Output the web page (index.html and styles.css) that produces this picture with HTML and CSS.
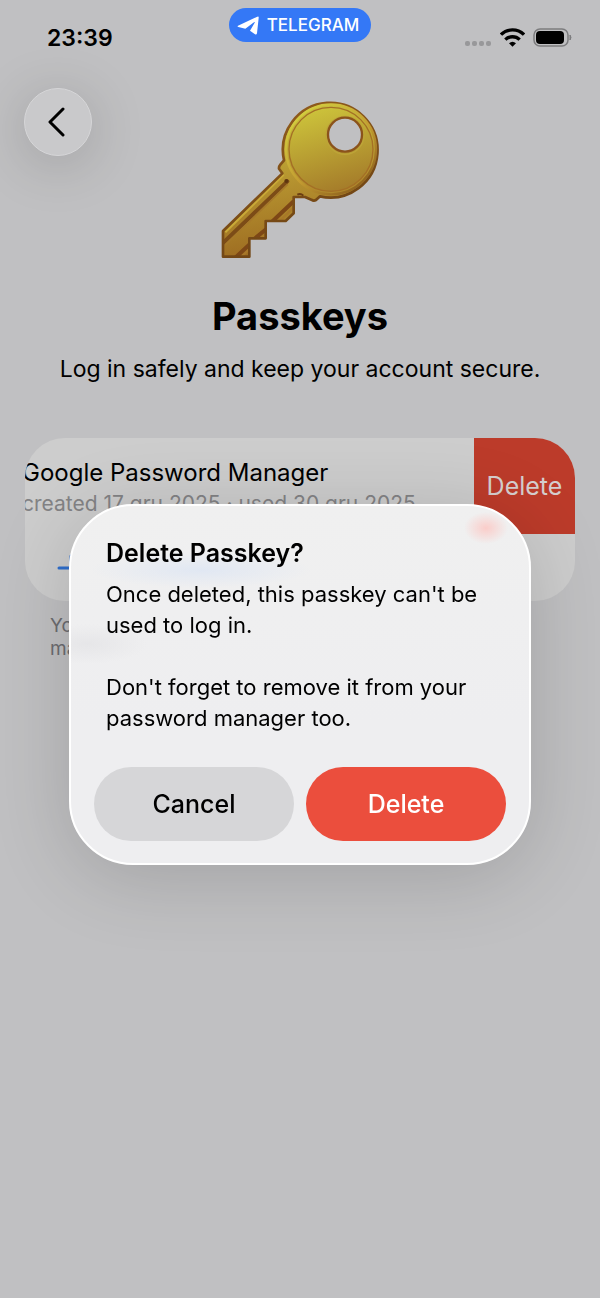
FILE: index.html
```html
<!DOCTYPE html>
<html lang="en">
<head>
	<meta charset="UTF-8">
	<meta name="viewport" content="width=device-width, initial-scale=1">
	<title>Passkeys</title>
	<link rel="stylesheet" href="styles.css">
</head>
<body>
<div class="status">
	<span class="time">23:39</span>
	<div class="app_pill">
		<svg width="22" height="19" viewBox="0 0 66 57"><path d="M3 29 61 2q5-2 4 4l-5 46q-1 5-6 3L39 44l14-24q2-4-2-1L25 38 4 33q-4-2-1-4Z" fill="#fff"/></svg>
		<span>TELEGRAM</span>
	</div>
	<div class="status_icons">
		<svg width="27" height="19" viewBox="0 0 27 19" fill="#98989a"><rect y="13" width="5" height="5" rx="2"/><rect x="7" y="13" width="5" height="5" rx="2"/><rect x="14" y="13" width="5" height="5" rx="2"/><rect x="21" y="13" width="5" height="5" rx="2"/></svg>
		<svg width="25" height="19" viewBox="0 0 75 57" fill="none" stroke="#000" stroke-width="10"><path d="M3 20a49 49 0 0 1 69 0M16 35a31 31 0 0 1 43 0"/><path d="M27 46q10.500-10 21 0L37.500 56Z" fill="#000" stroke="none"/></svg>
		<svg width="39" height="19" viewBox="0 0 39 19"><rect x="1" y="1" width="34" height="17" rx="6" fill="none" stroke="#7c7c7e" stroke-width="1.500"/><rect x="3" y="3" width="28" height="13" rx="4"/><path d="M37 7q2 2.500 0 5Z" fill="#7c7c7e" stroke="#7c7c7e"/></svg>
	</div>
</div>

<div class="header">
	<button class="back" type="button" aria-label="Back">
		<svg width="17" height="30" viewBox="0 0 17 30" fill="none" stroke="#000" stroke-width="3" stroke-linecap="round" stroke-linejoin="round"><path d="M15 2 2 15l13 13"/></svg>
	</button>
	<svg class="key" width="200" height="180" viewBox="0 -6 600 540">
		<defs>
			<linearGradient id="gold" x1="0.400" y1="0" x2="0.600" y2="1">
				<stop offset="0" stop-color="#cbc43c"/>
				<stop offset="0.500" stop-color="#b5922f"/>
				<stop offset="1" stop-color="#99651f"/>
			</linearGradient>
			<linearGradient id="face" x1="0.300" y1="0" x2="0.600" y2="1">
				<stop offset="0" stop-color="#cdc43b"/>
				<stop offset="1" stop-color="#a57c2a"/>
			</linearGradient>
			<linearGradient id="edge" x1="0" y1="0" x2="0.500" y2="1">
				<stop offset="0" stop-color="#99611f"/>
				<stop offset="1" stop-color="#6b4213"/>
			</linearGradient>
			<linearGradient id="shine" x1="0" y1="0" x2="0.800" y2="1">
				<stop offset="0" stop-color="#d8dc43"/>
				<stop offset="0.600" stop-color="#c39b31"/>
				<stop offset="1" stop-color="#8a5c1c"/>
			</linearGradient>
			<clipPath id="blade"><path d="M69 423 247 247 236 232 252 211A142 142 0 1 1 360 319L341 331 315 320H281V368L257 393H197V444H148V500H69Z"/></clipPath>
		</defs>
		<path d="M69 423 247 250 237 236Q236 230 241 224L252 211A142 142 0 1 1 360 319L348 330Q341 334 334 329L315 321H281V370L257 393H197V445H148V500H69Z" fill="url(#gold)"/>
		<g clip-path="url(#blade)">
			<path d="M76 427 251 254" stroke="#c9aa38" stroke-width="6"/>
			<path d="M70 458 262 274" stroke="#7c4c17" stroke-width="12" stroke-linecap="round"/>
			<path d="M77 464 263 283" stroke="#a6792a" stroke-width="5"/>
			<path d="M106 503 150 462M159 450 200 416M216 395 281 334" stroke="#7d4716" stroke-width="12"/>
			<path d="M118 506 152 474M174 454 202 430M231 401 281 352" stroke="#a87729" stroke-width="6"/>
		</g>
		<path d="M69 423 247 250 237 236Q236 230 241 224L252 211A142 142 0 1 1 360 319L348 330Q341 334 334 329L315 321H281V370L257 393H197V445H148V500H69Z" fill="none" stroke="url(#edge)" stroke-width="8" stroke-linejoin="round"/>
		<circle cx="393" cy="178" r="135" fill="none" stroke="url(#shine)" stroke-width="7"/>
		<circle cx="393" cy="178" r="126" fill="url(#face)" stroke="#a46f25" stroke-width="4"/>
		<circle cx="435" cy="136" r="57" fill="none" stroke="#bda438" stroke-width="4"/>
		<circle cx="435" cy="134" r="51" fill="#c0c0c2" stroke="#8b531b" stroke-width="7"/>
		<path d="M292 314q10-5 18 3" fill="none" stroke="#6b3d12" stroke-width="6"/>
		<circle cx="259" cy="273" r="6" fill="#5d350f"/>
	</svg>
</div>

<h1>Passkeys</h1>
<p class="intro">Log in safely and keep your account secure.</p>

<div class="list">
	<div class="row">
		<div class="row_text">
			<div class="row_name">Google Password Manager</div>
			<div class="row_date">created 17 gru 2025 · used 30 gru 2025</div>
		</div>
		<button class="swipe_delete" type="button">Delete</button>
	</div>
	<div class="row_add">
		<svg width="28" height="28" viewBox="0 0 28 28" stroke="#2f6fcd" stroke-width="3" stroke-linecap="round"><path d="M2 14h24M14 2v24"/></svg>
	</div>
</div>
<p class="note">Yo<br>ma</p>

<div class="overlay">
	<div class="dialog" role="alertdialog" aria-labelledby="dialogTitle" aria-describedby="dialogText">
		<h2 id="dialogTitle">Delete Passkey?</h2>
		<div class="dialog_text" id="dialogText">
			<p>Once deleted, this passkey can't be used to log in.</p>
			<p>Don't forget to remove it from your password manager too.</p>
		</div>
		<div class="dialog_btns">
			<button class="btn" type="button">Cancel</button>
			<button class="btn btn_red" type="button">Delete</button>
		</div>
	</div>
</div>
</body>
</html>
```

FILE: styles.css
```css
*{margin:0;padding:0;box-sizing:border-box;}
body{min-height:100vh;font:22px/31px Inter,"Liberation Sans",sans-serif;color:#000;background:#c0c0c2;overflow-x:hidden;}
button{font:inherit;color:inherit;border:0;background:none;cursor:pointer;}
svg{display:block;flex:none;}

/* status bar */
.status{display:grid;grid-template-columns:1fr auto 1fr;align-items:start;height:88px;padding:8px 28px 0;}
.time{padding:15px 0 0 19px;font-size:23px;font-weight:600;}
.app_pill{display:flex;align-items:center;gap:8px;height:34px;padding:0 12px 0 8px;border-radius:17px;font-size:17px;font-weight:500;color:#fff;background:#3478f6;}
.status_icons{display:flex;justify-content:flex-end;gap:8px;padding-top:20px;}

/* header */
.header{display:grid;grid-template-columns:68px 1fr 68px;align-items:start;padding:0 24px;}
.back{display:flex;align-items:center;justify-content:center;width:68px;height:68px;padding-right:4px;border:1px solid #d6d6d8;border-radius:50%;background:#c9c9cb;box-shadow:0 8px 56px rgba(0,0,0,0.18);}
.key{justify-self:center;}
h1{margin-top:24px;font-size:38px;line-height:48px;font-weight:700;text-align:center;}
.intro{margin-top:14px;font-size:23px;text-align:center;}

/* passkey list */
.list{margin:53px 25px 0;border-radius:40px;overflow:hidden;background:#cdcdcd;}
.row{display:flex;height:96px;}
.row_text{flex:0 0 100%;margin-left:-101px;padding:19px 0 0 98px;white-space:nowrap;}
.row_name{font-size:24px;}
.row_date{font-size:21px;color:#838385;}
.swipe_delete{flex:0 0 101px;font-size:25px;color:#d6cfce;background:#bc3b2a;}
.row_add{display:flex;align-items:center;height:67px;padding-left:32px;}
.note{margin:13px 50px 0;font-size:19px;line-height:23px;color:#6c6c70;}

/* dialog */
.overlay{position:fixed;top:0;right:0;bottom:0;left:0;display:flex;align-items:center;justify-content:center;padding:71px 69px 0;}
.dialog{width:100%;max-width:462px;padding:32px 23px 22px;border:2px solid #fff;border-radius:64px;background:
	radial-gradient(ellipse 22px 16px at 415px 22px,rgba(255,190,185,0.7),transparent),
	radial-gradient(ellipse 110px 18px at 130px 64px,rgba(218,228,244,0.7),transparent),
	radial-gradient(ellipse 60px 20px at 16px 138px,rgba(224,224,227,0.6),transparent),
	linear-gradient(#f0f0f0,#eeeef0 60%);box-shadow:0 12px 80px rgba(0,0,0,0.16);}
.dialog h2{padding:0 12px;font-size:25px;line-height:31px;font-weight:600;}
.dialog_text{margin-top:10px;padding:0 12px;}
.dialog_text p + p{margin-top:31px;}
.dialog_btns{display:flex;gap:12px;margin-top:33px;}
.btn{flex:1;height:74px;border-radius:37px;font-size:25px;font-weight:500;background:#d6d6d8;}
.btn_red{color:#fff;background:#eb4e3d;}
```
